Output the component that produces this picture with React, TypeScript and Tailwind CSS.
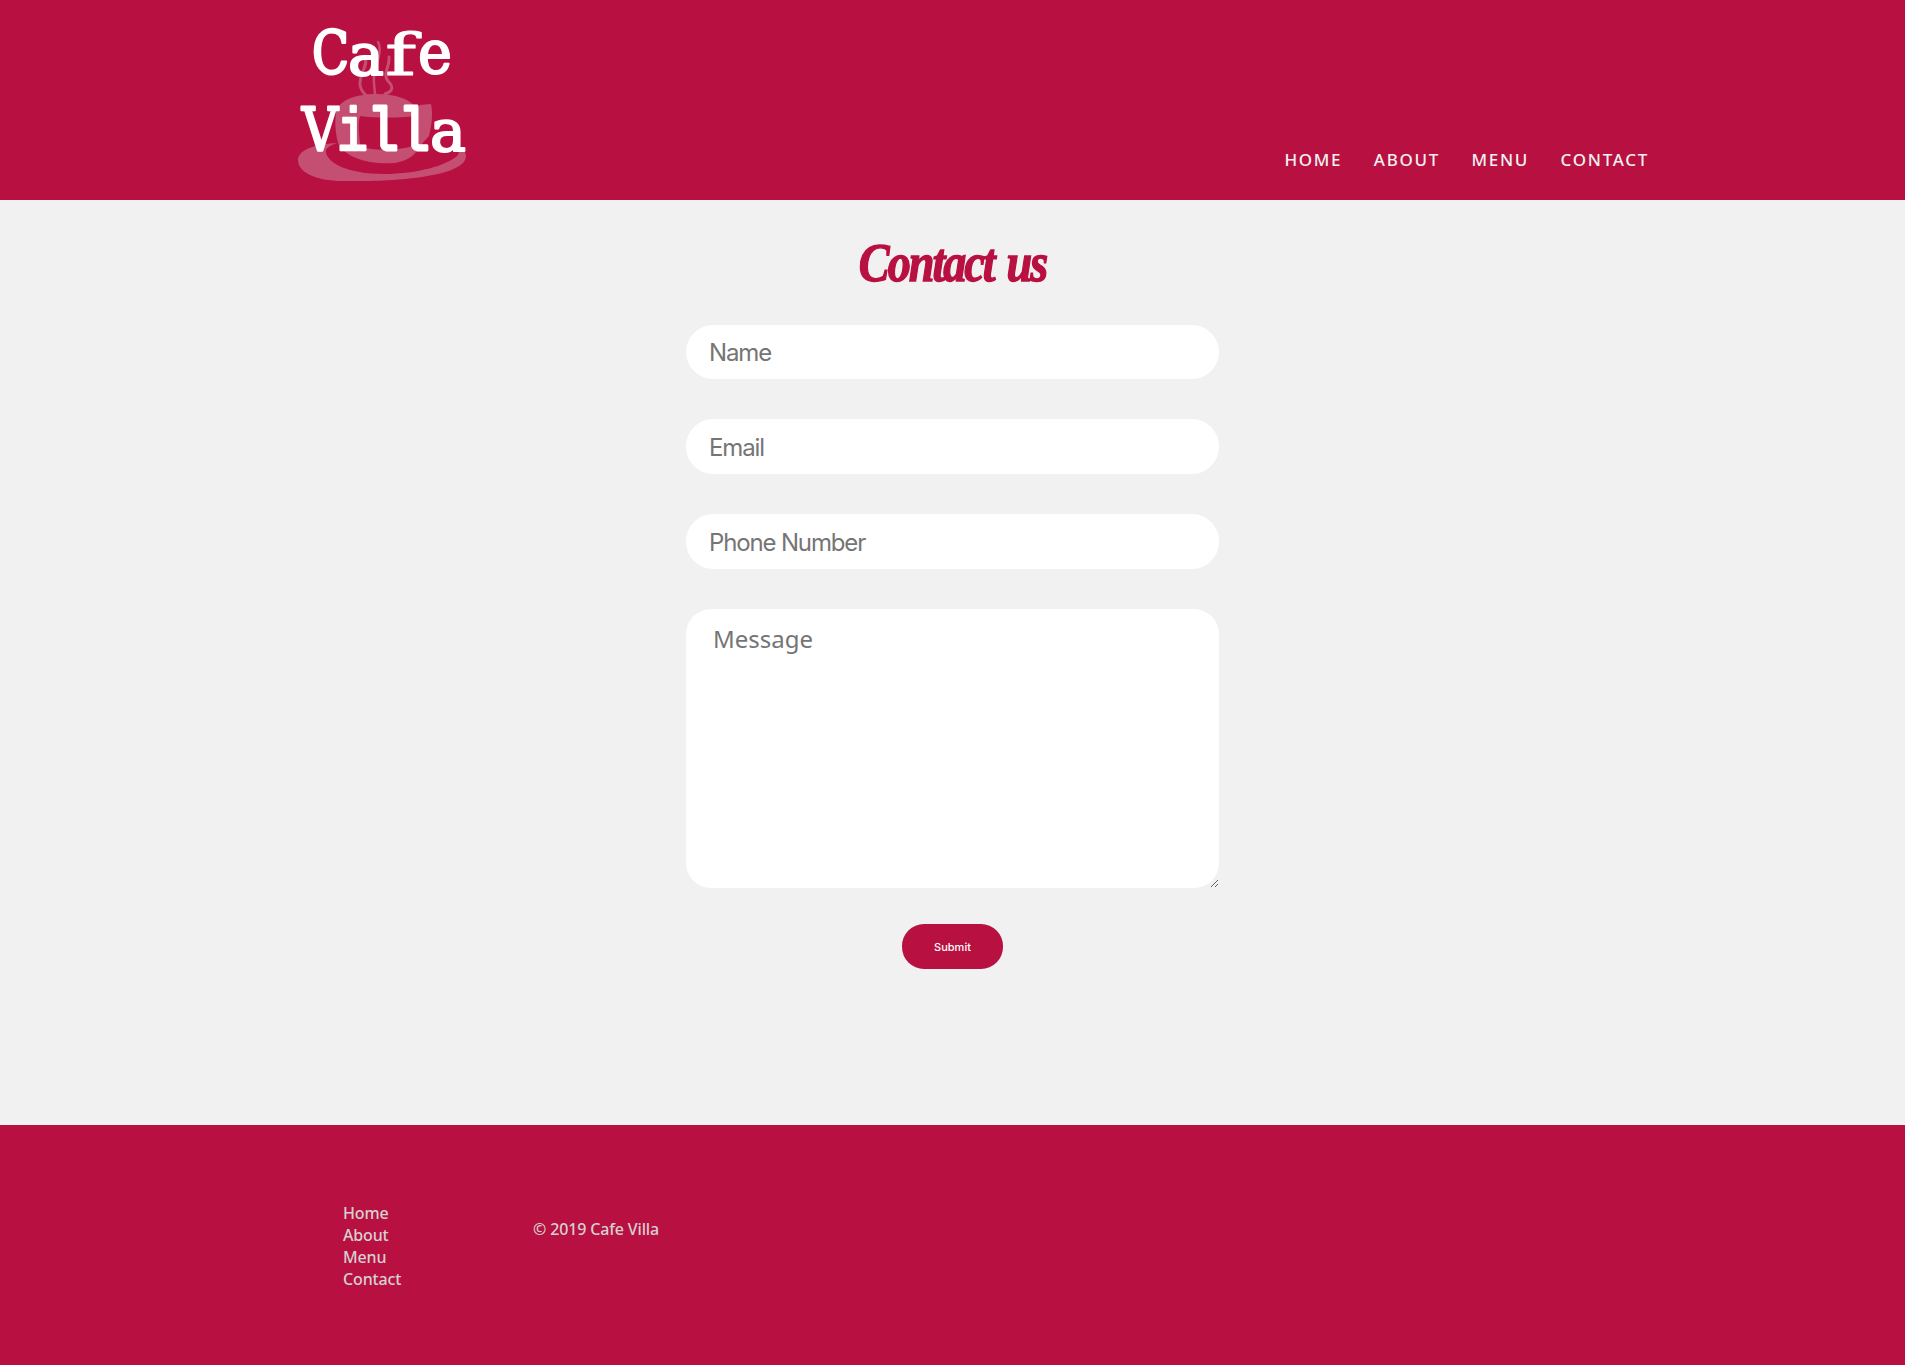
const navItems = ['Home', 'About', 'Menu', 'Contact'];

type Glyph = { ch: string; x: number; y: number; w: number; size: number; font: string; stroke: number };

const serif = 'DejaVu Serif, serif';
const mono = 'Liberation Mono, monospace';

const glyphs: Glyph[] = [
  { ch: 'C', x: 42, y: 74, w: 37, size: 60, font: serif, stroke: 2.6 },
  { ch: 'a', x: 78, y: 75, w: 36, size: 58, font: serif, stroke: 2 },
  { ch: 'f', x: 115, y: 75, w: 31, size: 58, font: serif, stroke: 1 },
  { ch: 'e', x: 148, y: 73, w: 34, size: 59, font: serif, stroke: 2 },
  { ch: 'V', x: 32, y: 151, w: 36, size: 60, font: serif, stroke: 2.6 },
  { ch: 'i', x: 67, y: 150, w: 31, size: 62, font: mono, stroke: 2.6 },
  { ch: 'l', x: 97, y: 150, w: 32, size: 62, font: mono, stroke: 3 },
  { ch: 'l', x: 128, y: 150, w: 32, size: 62, font: mono, stroke: 3 },
  { ch: 'a', x: 160, y: 151, w: 36, size: 58, font: serif, stroke: 2 },
];

function Logo() {
  return (
    <svg width="220" height="200" viewBox="0 0 220 200" role="img" aria-label="Cafe Villa">
      <g fill="#c54f72">
        <path
          fillRule="evenodd"
          d="M67 143C42 144 28 151 28 160c0 12 17 21 45 21 50 1 123-4 123-25 0-6-6-9-16-10 8 3 11 6 7 10-10 9-39 18-73 18-36 0-57-11-58-22-1-4 4-6 11-9z"
        />
        <path
          fillRule="evenodd"
          d="M66 112c3-12 20-18 40-18 19 0 35 5 41 15l3-4 11-1c2 9 1 20-2 32l-10 11c-3 8-12 14-24 16-28 2-50-6-57-20-3-12-3-21-2-31zm24 4c-3 11 0 21 0 30 9 5 39 5 52 0 5-9 4-20 2-30-14 2-38 2-54 0z"
        />
      </g>
      <g fill="none" stroke="#c54f72" strokeLinecap="round">
        <path strokeWidth="3" d="M95 56c4 9-6 18-5 29 1 6 4 9 8 12" />
        <path strokeWidth="2.5" d="M108 42c5 9-3 24-4 34-1 10 2 16 1 25" />
        <path strokeWidth="3" d="M119 57c1 10-7 17-1 24 5 5 6 10-3 13" />
      </g>
      <g fill="#fff" stroke="#fff" strokeLinejoin="round">
        {glyphs.map((g, i) => (
          <text
            key={i}
            x={g.x}
            y={g.y}
            fontFamily={g.font}
            fontSize={g.size}
            strokeWidth={g.stroke}
            textLength={g.w}
            lengthAdjust="spacingAndGlyphs"
          >
            {g.ch}
          </text>
        ))}
      </g>
    </svg>
  );
}

const inputClass =
  "h-[54.7px] w-full rounded-[27px] bg-white px-[23px] pt-[2px] font-['Inter',sans-serif] text-[24px] tracking-[-1.15px] text-[#333] outline-none placeholder:text-[#757575]";

export default function App() {
  return (
    <div className="flex h-[1365px] flex-col bg-[#f1f1f1] font-['Noto_Sans',sans-serif]">
      <header className="flex h-[200px] shrink-0 items-start justify-between bg-[#b81040] pr-[256px] pl-[270px]">
        <Logo />
        <nav className="mt-[148px] flex gap-[31.5px] text-[17px] leading-6 font-medium tracking-[1.7px] text-[#f1f1f1] uppercase">
          {navItems.map((n) => (
            <a key={n} href="#">
              {n}
            </a>
          ))}
        </nav>
      </header>

      <main className="flex h-[925px] shrink-0 flex-col items-center">
        <h1 className="mt-[30px] flex h-[64px] origin-center scale-x-[0.84] items-center font-['Liberation_Serif',serif] text-[55px] leading-none font-bold tracking-[-2.4px] [word-spacing:4px] whitespace-nowrap text-[#b81040] italic [-webkit-text-stroke:1.4px_#b81040]">
          Contact us
        </h1>
        <form className="mt-[30.6px] flex w-[533px] flex-col items-center">
          <div className="flex w-full flex-col gap-[40px]">
            <input className={inputClass} placeholder="Name" />
            <input className={inputClass} placeholder="Email" />
            <input className={inputClass} placeholder="Phone Number" />
            <textarea
              className="block h-[279.3px] w-full resize rounded-[25px] bg-white px-[27px] py-[13px] text-[24px] leading-[33px] text-[#333] outline-none placeholder:text-[#757575]"
              placeholder="Message"
            />
          </div>
          <button
            type="button"
            className="mt-[36px] h-[45px] w-[101px] rounded-[22px] bg-[#b81040] pt-px font-['Inter',sans-serif] text-[11px] font-medium text-white"
          >
            Submit
          </button>
        </form>
      </main>

      <footer className="flex h-[240px] shrink-0 bg-[#b81040] pl-[343px] text-[16px] leading-[22px] font-medium tracking-[-0.15px] text-[#d6d0d2]">
        <ul className="mt-[77px] w-[190px]">
          {navItems.map((n) => (
            <li key={n}>
              <a href="#">{n}</a>
            </li>
          ))}
        </ul>
        <p className="mt-[93px]">© 2019 Cafe Villa</p>
      </footer>
    </div>
  );
}
